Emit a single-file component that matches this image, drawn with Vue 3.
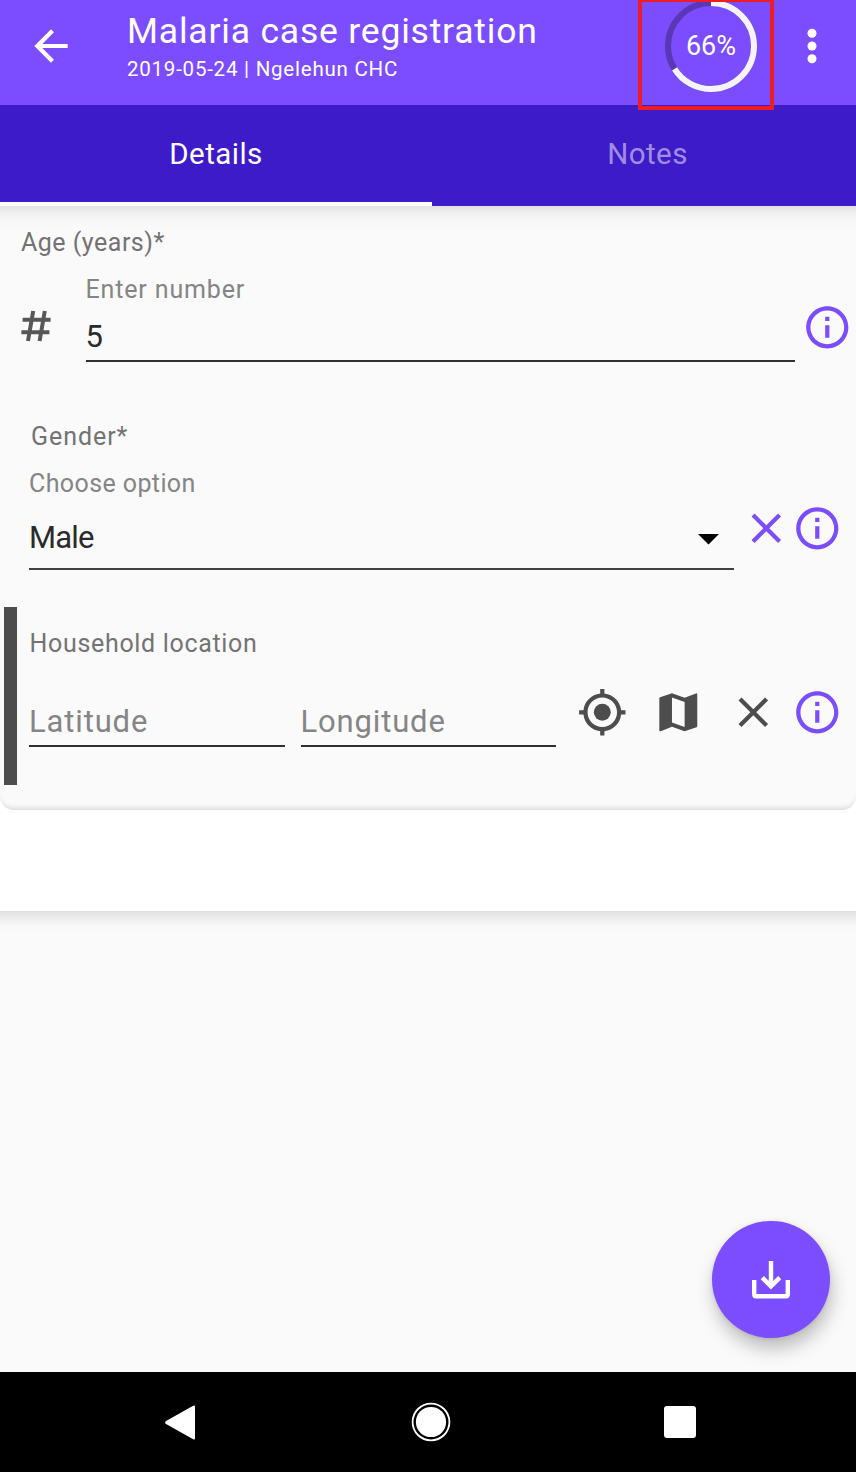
<script setup>
const completion = 66
const ringLength = 2 * Math.PI * 43
</script>

<template>
  <div class="screen">
    <header class="toolbar">
      <svg class="back" viewBox="0 0 24 24"><path d="M20 11H7.83l5.59-5.59L12 4l-8 8 8 8 1.41-1.41L7.83 13H20v-2z" /></svg>
      <div class="titles">
        <div class="title"><span>Malaria case registration</span></div>
        <div class="subtitle"><span>2019-05-24 | Ngelehun CHC</span></div>
      </div>
      <div class="progress">
        <svg viewBox="0 0 92 92">
          <circle class="track" cx="46" cy="46" r="43" />
          <circle class="value" cx="46" cy="46" r="43" transform="rotate(-90 46 46)"
            :stroke-dasharray="`${ringLength * completion / 100} ${ringLength}`" />
        </svg>
        <span class="percent">{{ completion }}%</span>
        <div class="highlight"></div>
      </div>
      <svg class="more" viewBox="0 0 10 36"><circle cx="5" cy="5.3" r="4.5" /><circle cx="5" cy="18" r="4.5" /><circle cx="5" cy="30.7" r="4.5" /></svg>
    </header>

    <nav class="tabs">
      <div class="tab active"><span>Details</span></div>
      <div class="tab"><span>Notes</span></div>
    </nav>

    <div class="sheet">
      <main class="card">
        <section class="age">
          <div class="label"><span class="t-age">Age (years)*</span></div>
          <div class="row">
            <svg class="hash" viewBox="0 0 30 32"><path d="M12.2 1 7 31M23.8 1 18.6 31M1.6 9.7h28M.4 22.3h28" /></svg>
            <div class="input">
              <div class="hint"><span class="t-enter">Enter number</span></div>
              <div class="text"><span>5</span></div>
            </div>
            <svg class="icon info" viewBox="0 0 24 24"><path d="M11 7h2v2h-2zm0 4h2v6h-2zm1-9C6.48 2 2 6.48 2 12s4.48 10 10 10 10-4.48 10-10S17.52 2 12 2zm0 18c-4.41 0-8-3.59-8-8s3.59-8 8-8 8 3.59 8 8-3.59 8-8 8z" /></svg>
          </div>
        </section>

        <section class="gender">
          <div class="label"><span class="t-gender">Gender*</span></div>
          <div class="row">
            <div class="input">
              <div class="hint"><span class="t-choose">Choose option</span></div>
              <div class="text"><span class="t-male">Male</span><svg class="caret" viewBox="0 0 20 10"><path d="M0 0h20L10 10z" /></svg></div>
            </div>
            <svg class="icon clear" viewBox="0 0 24 24"><path d="M19 6.41 17.59 5 12 10.59 6.41 5 5 6.41 10.59 12 5 17.59 6.41 19 12 13.41 17.59 19 19 17.59 13.41 12z" /></svg>
            <svg class="icon info" viewBox="0 0 24 24"><path d="M11 7h2v2h-2zm0 4h2v6h-2zm1-9C6.48 2 2 6.48 2 12s4.48 10 10 10 10-4.48 10-10S17.52 2 12 2zm0 18c-4.41 0-8-3.59-8-8s3.59-8 8-8 8 3.59 8 8-3.59 8-8 8z" /></svg>
          </div>
        </section>

        <section class="location">
          <div class="label"><span class="t-house">Household location</span></div>
          <div class="row">
            <div class="coord"><span>Latitude</span></div>
            <div class="coord"><span>Longitude</span></div>
            <svg class="icon gps" viewBox="0 0 24 24"><circle cx="12" cy="12" r="4" /><path d="M20.94 11c-.46-4.17-3.77-7.48-7.94-7.94V1h-2v2.06C6.83 3.52 3.52 6.83 3.06 11H1v2h2.06c.46 4.17 3.77 7.48 7.94 7.94V23h2v-2.06c4.17-.46 7.48-3.77 7.94-7.94H23v-2h-2.06zM12 19c-3.87 0-7-3.13-7-7s3.13-7 7-7 7 3.13 7 7-3.13 7-7 7z" /></svg>
            <svg class="icon map" viewBox="0 0 24 24"><path d="M20.5 3l-.16.03L15 5.1 9 3 3.36 4.9c-.21.07-.36.25-.36.48V20.5c0 .28.22.5.5.5l.16-.03L9 18.9l6 2.1 5.64-1.9c.21-.07.36-.25.36-.48V3.5c0-.28-.22-.5-.5-.5zM15 19l-6-2.11V5l6 2.11V19z" /></svg>
            <svg class="icon clear" viewBox="0 0 24 24"><path d="M19 6.41 17.59 5 12 10.59 6.41 5 5 6.41 10.59 12 5 17.59 6.41 19 12 13.41 17.59 19 19 17.59 13.41 12z" /></svg>
            <svg class="icon info" viewBox="0 0 24 24"><path d="M11 7h2v2h-2zm0 4h2v6h-2zm1-9C6.48 2 2 6.48 2 12s4.48 10 10 10 10-4.48 10-10S17.52 2 12 2zm0 18c-4.41 0-8-3.59-8-8s3.59-8 8-8 8 3.59 8 8-3.59 8-8 8z" /></svg>
          </div>
        </section>
      </main>
    </div>

    <div class="rest">
      <div class="fab">
        <svg viewBox="0 0 38 38"><path d="M2.2 19v14.3q0 2 2 2h29.6q2 0 2-2V19" /><path d="M19 0v25M10.3 16.6 19 25.3l8.7-8.7" /></svg>
      </div>
    </div>

    <footer class="system">
      <svg class="sys-back" viewBox="0 0 30 35"><path d="M28.2.8Q30 0 30 1.8v31.4q0 1.8-1.8 1L1 19Q-.8 17.5 1 16z" /></svg>
      <svg class="sys-home" viewBox="0 0 40 40"><circle cx="20" cy="20" r="18.4" fill="none" stroke="#fff" stroke-width="1.8" /><circle cx="20" cy="20" r="15.1" /></svg>
      <div class="sys-recent"></div>
    </footer>
  </div>
</template>

<style>
body { margin: 0; }
</style>

<style scoped>
.screen {
  width: 856px;
  height: 1472px;
  overflow: hidden;
  display: flex;
  flex-direction: column;
  font-family: Roboto, sans-serif;
  background: #fafafa;
}
.screen * { box-sizing: border-box; }
span { white-space: nowrap; }
svg { display: block; flex: none; }

.toolbar {
  height: 105px;
  flex: none;
  display: flex;
  background: #7c4dff;
  color: #fff;
}
.back { width: 50px; height: 50px; margin: 21px 0 0 26px; fill: #fff; }
.titles { width: 538px; margin: 11px 0 0 51px; }
.title { height: 40px; line-height: 40px; font-size: 35.5px; letter-spacing: 0.8px; }
.subtitle { height: 28px; margin-top: 4px; line-height: 28px; font-size: 20.5px; letter-spacing: 0.77px; }
.progress { position: relative; width: 92px; height: 92px; flex: none; }
.progress svg { width: 92px; height: 92px; }
.progress circle { fill: none; stroke-width: 6; }
.progress .track { stroke: #5a37b5; }
.progress .value { stroke: #f6f4fb; }
.percent { position: absolute; inset: 0; text-align: center; line-height: 92px; font-size: 27px; }
.highlight { position: absolute; z-index: 2; left: -27px; top: -2px; width: 136px; height: 112px; border: 4px solid #f01c24; }
.more { width: 10px; height: 36px; margin: 28px 0 0 50px; fill: #fff; }

.tabs {
  height: 101px;
  flex: none;
  display: grid;
  grid-template-columns: 432px 431px;
  background: #3d1bc8;
  overflow: hidden;
}
.tab {
  height: 101px;
  text-align: center;
  line-height: 98px;
  font-size: 29.5px;
  letter-spacing: 0.45px;
  color: #a08de3;
}
.tab.active { color: #fff; border-bottom: 4px solid #fff; }

.sheet {
  height: 705px;
  flex: none;
  background: #fff;
}
.card {
  height: 604px;
  padding-top: 20px;
  border-radius: 0 0 14px 14px;
  background: linear-gradient(#e2e2e2, #f0f0f0 7px, #f8f8f8 16px, #fafafa 24px);
  box-shadow: inset 0 -6px 5px -4px #d9d9d9;
}
.row { display: flex; }
.label, .hint { height: 32px; line-height: 32px; font-size: 25px; color: #737373; }
.hint { color: #858585; }
.icon { width: 50.6px; height: 50.6px; fill: #4d4d4d; }
.info { fill: #7c4dff; }
.text { display: flex; justify-content: space-between; font-size: 31px; color: #2b2b2b; line-height: 40px; }
.t-age { letter-spacing: 0.5px; }
.t-enter { letter-spacing: 0.85px; }
.t-gender { letter-spacing: 0.95px; }
.t-choose { letter-spacing: 0.4px; }
.t-male { letter-spacing: -0.8px; }
.t-house { letter-spacing: 0.68px; }

.age { height: 194px; }
.age .label { margin: 1px 0 15px 21px; }
.hash { width: 30px; height: 32px; margin: 36px 0 0 20.5px; fill: none; stroke: #575757; stroke-width: 4; stroke-linecap: butt; }
.age .input { width: 709px; height: 88px; margin-left: 35px; border-bottom: 2px solid #303030; }
.age .input .text { margin-top: 11px; }
.age .info { margin: 27.5px 0 0 7px; }

.gender { height: 186px; }
.gender .label { margin-left: 31px; }
.gender .row { margin-top: 15px; }
.gender .input { width: 705px; height: 102px; margin-left: 29px; border-bottom: 2px solid #414141; }
.gender .text { margin-top: 18px; }
.caret { width: 21px; height: 10.5px; margin: 16px 15px 0 0; fill: #000; }
.gender .clear { margin: 34.5px 0 0 7px; fill: #7c4dff; }
.gender .info { margin: 34.5px 0 0 0.5px; }

.location {
  width: 852px;
  height: 178px;
  margin-left: 4px;
  padding: 21px 0 0 12px;
  border-left: 13px solid #4d4d4d;
}
.location .label { padding-left: 0.5px; }
.location .row { margin-top: 26px; }
.coord { width: 255.5px; height: 61px; margin-right: 16px; padding-top: 15px; line-height: 41px; font-size: 31px; letter-spacing: 0.85px; color: #858585; border-bottom: 2px solid #303030; }
.gps { margin: 0.5px 0 0 5px; }
.map { margin: 0.5px 0 0 25px; }
.location .clear { margin: 0.5px 0 0 25px; }
.location .info { margin: 0.5px 0 0 13px; }

.rest {
  flex: 1;
  display: flex;
  justify-content: flex-end;
  align-items: flex-end;
  padding: 0 26.5px 34px 0;
  background: linear-gradient(#e0e0e0, #ededed 7px, #f8f8f8 15px, #fafafa 22px);
}
.fab {
  width: 117.5px;
  height: 117.5px;
  padding-top: 1px;
  display: flex;
  justify-content: center;
  align-items: center;
  border-radius: 50%;
  background: #7c4dff;
  box-shadow: 2px 11px 18px rgba(0, 0, 0, 0.24), 0 1px 4px rgba(0, 0, 0, 0.1);
}
.fab svg { width: 38px; height: 38px; fill: none; stroke: #fff; stroke-width: 4.4; }

.system { height: 100px; flex: none; display: flex; align-items: center; background: #000; }
.system svg { fill: #fff; }
.sys-back { width: 30px; height: 35px; margin-left: 165px; }
.sys-home { width: 40px; height: 40px; margin-left: 216px; }
.sys-recent { width: 32px; height: 32px; margin-left: 213px; border-radius: 3px; background: #fff; }
</style>
